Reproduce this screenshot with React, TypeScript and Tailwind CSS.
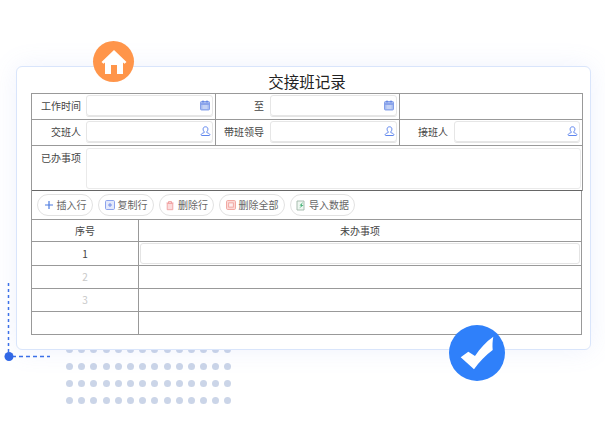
const cellInput = 'h-[21px] flex-1 rounded-[3px] border border-[#e6e6e6] shadow-[0_1px_0_#e4e4e4] flex items-center justify-end pr-[1px]';

function CalendarIcon() {
  return (
    <svg width="11" height="11" viewBox="0 0 11 11">
      <rect x="0.5" y="1.5" width="9" height="8.5" rx="1" fill="#a9bdf0" stroke="#6f8fe6" strokeWidth="0.8" />
      <path d="M3 0.5v2M7 0.5v2" stroke="#4f74de" strokeWidth="1" />
      <path d="M1 4h8" stroke="#5f82e2" strokeWidth="0.8" />
      <path d="M2.5 6h5M2.5 8h5" stroke="#eef2fd" strokeWidth="0.8" />
    </svg>
  );
}

function UserIcon() {
  return (
    <svg width="11" height="11" viewBox="0 0 11 11" fill="none" stroke="#5f86ee" strokeWidth="1">
      <path d="M5.5 0.8c-1.6 0-2.4 1-2.4 2.4 0 1.2.5 2 1.1 2.6v.8c-1 .4-2.6.9-3 1.7-.2.5-.1 1.2.4 1.2h7.8c.5 0 .6-.7.4-1.2-.4-.8-2-1.3-3-1.7v-.8c.6-.6 1.1-1.4 1.1-2.6 0-1.4-.8-2.4-2.4-2.4z" />
    </svg>
  );
}

function Field({ label, icon, last, labelPad = 'pr-[5px]' }: { label: string; icon: 'cal' | 'user'; last?: boolean; labelPad?: string }) {
  return (
    <div className={`flex items-start pt-[1px] pr-[2px] ${last ? '' : 'border-r border-[#999]'}`}>
      <span className={`w-[54px] h-[21px] shrink-0 flex items-center justify-end pt-[1px] ${labelPad}`}>{label}</span>
      <div className={cellInput}>{icon === 'cal' ? <CalendarIcon /> : <UserIcon />}</div>
    </div>
  );
}

function ToolButton({ label, w, icon }: { label: string; w: string; icon: React.ReactNode }) {
  return (
    <div className={`${w} h-[22px] rounded-full border border-[#e2e2e2] flex items-center justify-center gap-[3px] text-[#666]`}>
      {icon}
      <span>{label}</span>
    </div>
  );
}

function Row({ num, numColor, children }: { num?: string; numColor?: string; children?: React.ReactNode }) {
  return (
    <div className="flex h-[23px] border-b border-[#999]">
      <div className={`w-[107px] shrink-0 border-r border-[#999] flex items-center justify-center ${numColor ?? ''}`}>{num}</div>
      <div className="flex-1 flex items-center px-[2px]">{children}</div>
    </div>
  );
}

export default function App() {
  const dots = Array.from({ length: 56 });

  return (
    <div className="relative w-[605px] h-[428px] overflow-hidden bg-white font-['Noto_Sans_CJK_SC','Noto_Sans',sans-serif] text-[10px] leading-none text-[#444] pt-[66px] pl-[16px]">
      {/* Dot field behind the card */}
      <div className="absolute left-[66px] top-[346px] grid grid-cols-[repeat(14,7px)] gap-x-[5.2px] gap-y-[9.9px]">
        {dots.map((_, i) => (
          <span key={i} className="w-[7px] h-[7px] rounded-full bg-[#cbd5e8]" />
        ))}
      </div>

      {/* Dashed corner */}
      <svg className="absolute left-0 top-[280px]" width="56" height="86" viewBox="0 0 56 86" fill="none">
        <path d="M8.500 3V76" stroke="#3b6fe8" strokeWidth="1.5" strokeDasharray="3 3" />
        <path d="M12 76.500H50" stroke="#3b6fe8" strokeWidth="1.5" strokeDasharray="4 3" />
        <circle cx="9" cy="76.500" r="4.500" fill="#3168e6" />
      </svg>

      {/* Main card */}
      <div className="relative w-[575px] h-[284px] rounded-[6px] border border-[#d9e5fb] bg-white shadow-[0_0_26px_rgba(120,150,240,0.12)] px-[14px]">
        <div className="h-[26px] flex items-end justify-center text-[15.5px] leading-[22px] text-[#222] pl-[7px] pb-[1px]">交接班记录</div>

        <div className="w-[552px] border border-[#999] border-b-0">
          <div className="grid grid-cols-[184px_184px_1fr] h-[26px] border-b border-[#999]">
            <Field label="工作时间" icon="cal" />
            <Field label="至" icon="cal" labelPad="pr-[6px]" />
            <div />
          </div>
          <div className="grid grid-cols-[184px_184px_1fr] h-[26px] border-b border-[#999]">
            <Field label="交班人" icon="user" />
            <Field label="带班领导" icon="user" labelPad="pr-[6px]" />
            <Field label="接班人" icon="user" labelPad="pr-[6px]" last />
          </div>
          <div className="flex h-[45px] border-b border-[#666] pr-[1px] pb-[1px] pt-[2px]">
            <span className="w-[54px] shrink-0 pr-[5px] pt-[5px] text-right">已办事项</span>
            <div className="flex-1 rounded-[3px] border border-[#eaeaea]" />
          </div>
        </div>

        <div className="w-[551px] border-x border-[#999]">
          <div className="h-[29px] flex items-center gap-[5px] pl-[5px] border-b border-[#999]">
            <ToolButton
              label="插入行"
              w="w-[56px]"
              icon={
                <svg width="10" height="10" viewBox="0 0 10 10" fill="none" stroke="#4c7be0" strokeWidth="1.2">
                  <path d="M5 1v8M1 5h8" />
                </svg>
              }
            />
            <ToolButton
              label="复制行"
              w="w-[56px]"
              icon={
                <svg width="10" height="10" viewBox="0 0 10 10" fill="none">
                  <rect x="0.5" y="0.5" width="9" height="9" rx="1.200" fill="#e4e9fb" stroke="#8da3ec" />
                  <path d="M5 3v4M3 5h4" stroke="#6b86e6" strokeWidth="0.9" />
                </svg>
              }
            />
            <ToolButton
              label="删除行"
              w="w-[55px]"
              icon={
                <svg width="10" height="11" viewBox="0 0 10 11" fill="none">
                  <path d="M1.500 3h7M3.500 3V1.600h3V3" stroke="#ef9a9a" strokeWidth="0.9" />
                  <path d="M2.200 3.500h5.600v6.200H2.200z" fill="#fbdcdc" stroke="#f0a0a0" strokeWidth="0.9" />
                </svg>
              }
            />
            <ToolButton
              label="删除全部"
              w="w-[66px]"
              icon={
                <svg width="10" height="10" viewBox="0 0 10 10" fill="none">
                  <rect x="0.5" y="0.5" width="9" height="9" rx="1.200" fill="#fbd9d6" stroke="#f2a8a2" />
                  <rect x="2.700" y="2.900" width="4.600" height="4.200" fill="#fdeeee" stroke="#ee9a94" strokeWidth="0.8" />
                </svg>
              }
            />
            <ToolButton
              label="导入数据"
              w="w-[65px]"
              icon={
                <svg width="10" height="11" viewBox="0 0 10 11" fill="none">
                  <path d="M1 1h7v9H1z" fill="#eef7f1" stroke="#9fb5a8" strokeWidth="0.9" />
                  <path d="M7 2 3.500 5.500h2L3.100 8.600 7.500 5h-2z" fill="#2fa866" />
                </svg>
              }
            />
          </div>

          <div className="flex h-[22px] border-b border-[#999]">
            <div className="w-[107px] shrink-0 border-r border-[#999] flex items-center justify-center">序号</div>
            <div className="flex-1 flex items-center justify-center">未办事项</div>
          </div>
          <div className="flex h-[24px] border-b border-[#999]">
            <div className="w-[107px] shrink-0 border-r border-[#999] flex items-center justify-center">1</div>
            <div className="flex-1 flex items-center px-[1px]">
              <div className="w-full h-[21px] rounded-[3px] border border-[#e4e4e4]" />
            </div>
          </div>
          <Row num="2" numColor="text-[#c8c8c8]" />
          <Row num="3" numColor="text-[#c8c8c8]" />
          <Row />
        </div>
      </div>

      {/* Home badge */}
      <div className="absolute left-[93px] top-[41px] w-[41px] h-[41px] rounded-full bg-[#ff954a] flex items-center justify-center">
        <svg width="26" height="26" viewBox="0 0 26 26" fill="#fff">
          <path d="M13 1 0.500 13l2 1.800 1.500-1.300V25h6v-9h6v9h6V13.500l1.500 1.300 2-1.800z" />
        </svg>
      </div>

      {/* Check badge */}
      <div className="absolute left-[449px] top-[325px] w-[56px] h-[56px] rounded-full bg-[#2f80fa]">
        <svg width="56" height="56" viewBox="0 0 56 56" fill="#fff">
          <path d="M11.700 32.300 19.300 26.700 26 31C31 23.500 37 16.500 44.300 11.700 43.500 16 43.300 20.500 43.700 25 36.500 30.500 30 37 25 44.300z" />
        </svg>
      </div>
    </div>
  );
}
